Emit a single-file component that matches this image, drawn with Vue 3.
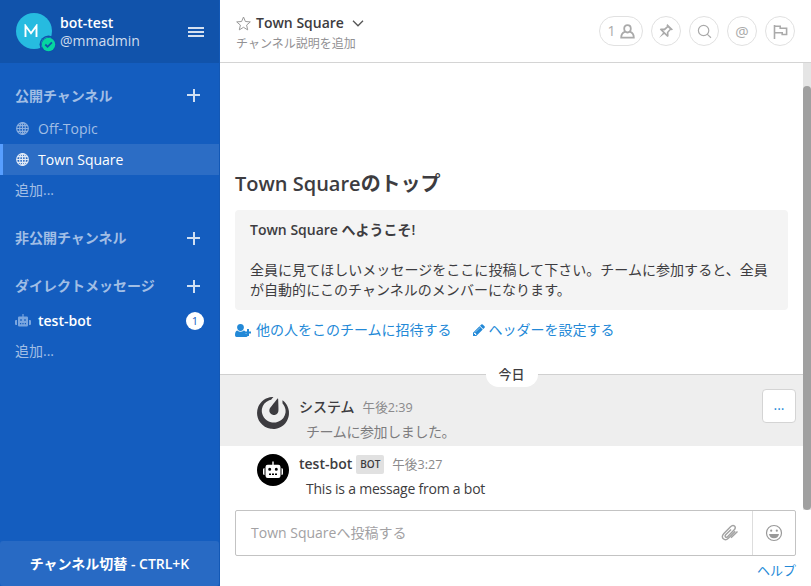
<script setup>
const publicChannels = [
  { name: 'Off-Topic', active: false },
  { name: 'Town Square', active: true },
]
</script>

<template>
  <div class="app">
    <aside class="sidebar">
      <header class="team">
        <div class="avatar">
          <svg class="avatar-letter" viewBox="0 0 14 14"><path d="M1.5 13V1.8L7 9.2l5.5-7.4V13" /></svg>
          <svg class="status" viewBox="0 0 15 15">
            <circle cx="7.5" cy="7.5" r="7.5" fill="#1153ab" />
            <circle cx="7.5" cy="7.5" r="6.7" fill="#06d6a0" />
            <path d="M4.3 7.5l2.3 2.3 4.3-4.4" fill="none" stroke="#1153ab" stroke-width="1.8" />
          </svg>
        </div>
        <div class="names">
          <b>bot-test</b>
          <span>@mmadmin</span>
        </div>
        <svg class="burger" viewBox="0 0 16 10"><path d="M0 0h16v2H0zM0 4h16v2H0zM0 8h16v2H0z" /></svg>
      </header>

      <nav class="channels">
        <section>
          <h4>公開チャンネル<i class="plus"></i></h4>
          <a v-for="c in publicChannels" :key="c.name" class="row" :class="{ active: c.active }">
            <svg class="globe" viewBox="0 0 13 13">
              <circle cx="6.5" cy="6.5" r="5.8" />
              <ellipse cx="6.5" cy="6.5" rx="2.8" ry="5.8" />
              <path d="M6.5.7v11.6M.7 6.5h11.6M1.5 3.6h10M1.5 9.4h10" />
            </svg>
            {{ c.name }}
          </a>
          <a class="row more">追加...</a>
        </section>
        <section>
          <h4>非公開チャンネル<i class="plus"></i></h4>
        </section>
        <section>
          <h4>ダイレクトメッセージ<i class="plus"></i></h4>
          <a class="row unread">
            <svg class="robot" viewBox="0 0 16 13">
              <path fill-rule="evenodd" d="M7.4 0h1.2v2.5h3.2q1.2 0 1.2 1.2v7.6q0 1.2-1.2 1.2H4.2Q3 12.5 3 11.300V3.700q0-1.200 1.200-1.200h3.200zM5.200 5.200v1.600h1.600V5.200zM9.200 5.200v1.600h1.600V5.200zM5 9v1.200h1.200V9zM7.400 9v1.200h1.200V9zM9.800 9v1.200H11V9zM1 6h1v5H1q-1 0-1-1V7q0-1 1-1zM14 6h1q1 0 1 1v3q0 1-1 1h-1z" />
            </svg>
            test-bot
            <span class="badge">1</span>
          </a>
          <a class="row more">追加...</a>
        </section>
      </nav>
      <button class="switcher">チャンネル切替 - CTRL+K</button>
    </aside>

    <main class="center">
      <header class="channel-header">
        <div class="channel-info">
          <div class="title">
            <svg class="star" viewBox="0 0 15 15"><path d="M7.500 1l1.900 4.500 4.900.4-3.700 3.200 1.100 4.800-4.200-2.600-4.200 2.600 1.100-4.800L.7 5.900l4.900-.4z" /></svg>
            <strong>Town Square</strong>
            <svg class="chevron" viewBox="0 0 12 7"><path d="M1 .8l5 5 5-5" /></svg>
          </div>
          <div class="desc">チャンネル説明を追加</div>
        </div>
        <div class="tools">
          <span class="tool members">1
            <svg width="15" height="15" viewBox="0 0 15 15"><path d="M7.500 1.200c2.200 0 3.300 1.500 3.300 3.500S9.500 8.500 7.500 8.500 4.200 6.700 4.200 4.700s1.100-3.500 3.300-3.500zM4.700 7.900C2.500 8.800 1.200 10 1.200 13.600h12.600c0-3.600-1.300-4.800-3.500-5.700" fill="none" stroke="currentColor" stroke-width="1.800" /></svg>
          </span>
          <span class="tool">
            <svg width="16" height="16" viewBox="0 0 16 16"><path fill="currentColor" fill-rule="evenodd" d="M9.300 1l5.700 5.500-1.200.8-1-.3-2.300 2.600.1 3.600-1.200.8L6.200 11 1 15l4-5.200-3.200-3.200.8-1.200 3.600.1L8.900 3.200 8.500 2.200zM10 4.400L6.700 7.400 4.900 7.300l4 4-.1-2 2.900-3.300z" /></svg>
          </span>
          <span class="tool">
            <svg width="15" height="15" viewBox="0 0 15 15"><path d="M11.800 6.500a5.200 5.200 0 1 1-10.400 0 5.200 5.200 0 0 1 10.400 0zM10.400 10.400l3.600 3.300" fill="none" stroke="currentColor" stroke-width="1.200" /></svg>
          </span>
          <span class="tool at">@</span>
          <span class="tool">
            <svg width="15" height="15" viewBox="0 0 15 15"><path d="M1.500 1v14M1.500 2.300h5.700v1.900h6.400v6.300H9.200V8.700H1.500" fill="none" stroke="currentColor" stroke-width="1.600" /></svg>
          </span>
        </div>
      </header>

      <div class="feed">
        <div class="posts">
          <div class="intro">
            <h2>Town Squareのトップ</h2>
            <div class="welcome">
              <strong>Town Square へようこそ!</strong>
              <p>全員に見てほしいメッセージをここに投稿して下さい。チームに参加すると、全員が自動的にこのチャンネルのメンバーになります。</p>
            </div>
            <div class="links">
              <a>
                <svg width="16" height="13" viewBox="0 0 16 13"><path fill="currentColor" d="M5.500 0C7.800 0 8.900 1.500 8.900 3.400S7.500 7 5.500 7 2.100 5.300 2.100 3.400 3.200 0 5.500 0zM2.200 6.400q3.300 2.600 6.600 0 .8.100 1.400.8v2.500h2.400v2q0 1.300-1.500 1.300H1.500Q0 13 0 11.200 0 6.800 2.200 6.400zM12 5h2v2.500h2v2h-2V12h-2V9.500H9.800v-2H12z" /></svg>
                他の人をこのチームに招待する
              </a>
              <a>
                <svg width="14" height="14" viewBox="0 0 1792 1792"><path fill="currentColor" d="M491 1536l91-91-235-235-91 91v107h128v128h107zm523-928q0-22-22-22-10 0-17 7l-542 542q-7 7-7 17 0 22 22 22 10 0 17-7l542-542q7-7 7-17zm-54-192l416 416-832 832h-416v-416zm683 96q0 53-37 90l-166 166-416-416 166-165q36-38 90-38 53 0 91 38l235 234q37 39 37 91z" /></svg>
                ヘッダーを設定する
              </a>
            </div>
          </div>

          <div class="divider"><span>今日</span></div>

          <article class="post system">
            <svg class="pic" viewBox="0 0 501 501">
              <path d="M236,.7C137.700,7.500,54,68.200,18.200,158.500c-32,81-19.600,172.800,33,242.500 39.800,53,97.200,87,164.300,97,16.500,2.700,48,3.200,63.500,1.200 48.700-6.300,92.200-24.600,129-54.200 13-10.500,33-31.200,42.200-43.700 26.400-35.500,42.800-75.800,49-120.300 1.600-12.300,1.600-48.700,0-61-4-28.300-12-54.800-24.200-79.500-12.800-26-26.500-45.300-46.800-65.800C417.800,64,400.200,49,398.400,49c-.6,0-.4,10.500.3,26l1.300,26 7,8.700c19,23.700,32.800,53.500,38.200,83 2.500,14,3.200,43,1,55.800-4.500,27.800-15.200,54-31,76.500-8.600,12.200-28,31.600-40.200,40.200-24,17-50,27.600-80,33-10,1.800-49,1.800-59,0-43-7.700-78.800-26-107.200-54.800-29.300-29.700-46.500-64-52.400-104.400-2-14-1.500-42,1-55C90,121.400,132,72,192,49.700c8-3,18.400-5.800,29.500-8.200 1.700-.4,34.400-38,35.300-40.600.3-1-10.200-1-20.800-.4z" />
              <path d="M322.200,24.600c-1.300.8-8.400,9.300-16,18.700-7.400,9.500-22.400,28-33.200,41.200-51,62.200-66,81.600-70.600,91-6,12-8.400,21-9,33-1.200,19.800,5,36,19,50C222,268,230,273,243,277.200c9,3,10.400,3.200,24,3.200 13.800,0,15,0,22.600-3 23.200-9,39-28.400,45-55.700 2-8.200,2-28.700.4-79.700l-2-72c-1-36.800-1.400-41.800-3-44-2-3-4.800-3.600-7.800-1.400z" />
            </svg>
            <div class="content">
              <div class="meta"><strong>システム</strong><time>午後2:39</time></div>
              <p>チームに参加しました。</p>
            </div>
            <button class="dots">...</button>
          </article>

          <article class="post bot">
            <svg class="pic" viewBox="0 0 32 32">
              <circle cx="16" cy="16" r="16" fill="#000" />
              <path fill="#fff" fill-rule="evenodd" d="M15.300 7.500h1.400v3.200h4.600q2.200 0 2.200 2.200v8.900q0 2.200-2.200 2.200H10.700q-2.200 0-2.200-2.200v-8.900q0-2.200 2.200-2.200h4.600zM12.700 13.700a1.500 1.500 0 1 0 0 3 1.500 1.500 0 1 0 0-3zM19.300 13.700a1.500 1.500 0 1 0 0 3 1.500 1.500 0 1 0 0-3zM12 19.500V21h2v-1.500zM15 19.500V21h2v-1.500zM18 19.500V21h2v-1.500zM7.500 14v7Q6 21 6 19.500v-4Q6 14 7.500 14zM24.500 14v7q1.500 0 1.500-1.500v-4q0-1.500-1.500-1.500z" />
            </svg>
            <div class="content">
              <div class="meta"><strong>test-bot</strong><span class="tag">BOT</span><time>午後3:27</time></div>
              <p>This is a message from a bot</p>
            </div>
          </article>
        </div>
        <div class="scrollbar"><div class="thumb"></div></div>
      </div>

      <footer class="composer">
        <div class="box">
          <span class="placeholder">Town Squareへ投稿する</span>
          <svg class="clip" width="18" height="17" viewBox="0 0 18 17"><path d="M14.200 7.200l-6.600 6.700c-1.600 1.600-3.700 2.400-5.300.9s-1-3.700.6-5.300l6.400-6.600c1.300-1.300 3-2 4.200-.8s.8 2.700-.5 4l-6.200 6.400c-.8.8-1.600 1.100-2.300.4s-.4-1.500.4-2.300l5.200-5.200M10 13.800l6.500-6.400" /></svg>
          <span class="emoji">
            <svg width="18" height="18" viewBox="0 0 18 18">
              <circle cx="9" cy="9" r="7.500" fill="none" stroke="currentColor" stroke-width="1.200" />
              <circle cx="6.200" cy="6.700" r="1.100" fill="currentColor" /><circle cx="11.800" cy="6.700" r="1.100" fill="currentColor" />
              <path d="M4 10h10q-.7 4.200-5 4.200T4 10z" fill="currentColor" />
            </svg>
          </span>
        </div>
        <a class="help">ヘルプ</a>
      </footer>
    </main>
  </div>
</template>

<style>
body {
  margin: 0;
  overflow: hidden;
}
</style>

<style scoped>
.app {
  display: flex;
  width: 811px;
  height: 586px;
  font: 14px/20px "Open Sans", "Noto Sans CJK JP", sans-serif;
  color: #3d3c40;
  background: #fff;
}
.app *, .app *::before, .app *::after { box-sizing: border-box; }
h2, h4, p { margin: 0; }
svg { flex: none; display: block; }
button { font: inherit; margin: 0; }

.sidebar {
  display: flex;
  flex-direction: column;
  width: 220px;
  flex: none;
  background: #145dbf;
  border-right: 1px solid #1358b5;
}
.team {
  display: flex;
  height: 63px;
  padding: 13px 14px 0 16px;
  background: #1153ab;
}
.avatar {
  position: relative;
  width: 36px;
  height: 36px;
  border-radius: 50%;
  background: #26bbe0;
}
.avatar-letter {
  width: 14px;
  height: 14px;
  margin: 11px 0 0 8px;
  fill: none;
  stroke: #fff;
  stroke-width: 1.900;
}
.status { position: absolute; width: 15px; height: 15px; right: -4px; bottom: -3px; border-radius: 50%; box-shadow: 0 0 0 1.500px #1153ab; }
.names {
  flex: 1;
  display: flex;
  flex-direction: column;
  padding: 1px 0 0 8px;
  line-height: 18px;
  color: #fff;
}
.names b { font-weight: 600; }
.names span { color: #d0ddee; }
.burger { width: 16px; height: 10px; margin: 14px 1px 0 0; fill: #d5e0f0; }

.channels { flex: 1; display: flex; flex-direction: column; }
section { display: flex; flex-direction: column; }
section:nth-child(1) { padding-top: 19px; }
section:nth-child(2) { padding-top: 18px; }
section:nth-child(3) { padding-top: 19px; }
h4 {
  display: flex;
  align-items: center;
  justify-content: space-between;
  height: 28px;
  padding: 0 19px 0 15px;
  font-size: 14px;
  font-weight: 600;
  color: #a1bee5;
}
section:nth-child(1) h4 { height: 31px; padding-bottom: 4px; }
section:nth-child(3) h4 { height: 34px; padding-bottom: 4px; }
.plus {
  width: 13px;
  height: 13px;
  background:
    linear-gradient(#d0dff2, #d0dff2) 0 5px / 13px 2px no-repeat,
    linear-gradient(#d0dff2, #d0dff2) 6px 0 / 2px 13px no-repeat;
}
.row {
  display: flex;
  align-items: center;
  height: 31px;
  padding: 0 15px 0 16px;
  color: #a1bee5;
}
.row.active {
  padding-left: 13px;
  color: #fff;
  border-left: 3px solid #579eff;
  background: #2c6dc5;
}
.row.more { padding: 0 15px 1px; }
.globe { width: 13px; height: 13px; margin-right: 9px; fill: none; stroke: currentColor; stroke-width: 1.200; opacity: .85; }
.robot { width: 16px; height: 13px; margin: 0 7px 0 -1px; fill: #79a5df; }
.row.unread { color: #fff; font-weight: 600; }
.badge {
  width: 18px;
  height: 18px;
  margin-left: auto;
  border-radius: 50%;
  background: #fff;
  color: #145dbf;
  font-size: 11px;
  font-weight: 400;
  line-height: 18px;
  text-align: center;
}
.switcher {
  height: 45px;
  padding: 0;
  border: 0;
  border-radius: 3px;
  background: #286ac4;
  color: #fff;
  font-weight: 600;
  font-size: 14px;
}

.center { flex: 1; display: flex; flex-direction: column; min-width: 0; }
.channel-header {
  display: flex;
  justify-content: space-between;
  height: 63px;
  padding: 0 16px 0 16px;
  border-bottom: 1px solid #d4d4d4;
}
.channel-info { padding-top: 13px; }
.title { display: flex; align-items: center; height: 20px; }
.title strong { font-weight: 600; }
.star { width: 15px; height: 15px; margin-right: 5px; fill: none; stroke: #999; stroke-width: 1; }
.chevron { width: 12px; height: 7px; margin-left: 8px; fill: none; stroke: #555; stroke-width: 1.300; }
.desc { font-size: 12px; color: #929194; line-height: 22px; }
.tools { display: flex; gap: 8px; padding-top: 16px; }
.tool {
  display: flex;
  align-items: center;
  justify-content: center;
  width: 30px;
  height: 30px;
  border: 1px solid #e1e1e1;
  border-radius: 15px;
  color: #aaa;
}
.members { width: 44px; gap: 4px; }
.at { font-size: 15px; }

.feed { display: flex; height: 447px; }
.posts { flex: 1; display: flex; flex-direction: column; min-width: 0; }
.intro { padding: 106px 15px 0 15px; height: 299px; }
h2 { font-size: 20px; line-height: 29px; font-weight: 600; }
.welcome {
  height: 100px;
  margin-top: 12px;
  padding: 10px 15px;
  border-radius: 4px;
  background: #f4f4f4;
}
.welcome strong { display: block; font-weight: 600; }
.welcome p { margin: 20px -5px 0 0; letter-spacing: .04px; }
.links { display: flex; gap: 20px; padding-top: 10px; color: #2389d7; }
.links a { display: flex; align-items: center; gap: 5px; }
.links a + a { gap: 3px; }
.divider {
  display: flex;
  justify-content: center;
  align-items: center;
  height: 25px;
  background: linear-gradient(#fff 12px, #d0d0d0 12px, #d0d0d0 13px, #eee 13px);
}
.divider span {
  width: 52px;
  height: 25px;
  border-radius: 13px;
  background: #fff;
  font-size: 13px;
  font-weight: 500;
  line-height: 25px;
  text-align: center;
}
.post { display: flex; padding-left: 37px; }
.post.system { height: 59px; background: #eee; padding-top: 10px; }
.post.bot { height: 64px; padding-top: 8px; }
.pic { width: 32px; height: 32px; fill: #3d3c40; }
.content { padding-left: 10px; flex: 1; }
.meta { display: flex; align-items: center; height: 20px; }
.meta strong { font-weight: 500; }
.bot .meta strong { font-weight: 600; }
.meta time { margin-left: 8px; padding-top: 1px; font-size: 12.600px; color: #8b8a8c; }
.content p { padding: 5px 0 0 7px; }
.system .content p { color: #7d7c7e; letter-spacing: -.400px; }
.bot .content p { letter-spacing: -.220px; }
.tag {
  width: 28px;
  height: 19px;
  margin-left: 4px;
  border-radius: 2px;
  background: #e1e1e1;
  font-size: 10px;
  font-weight: 600;
  line-height: 19px;
  text-align: center;
}
.dots {
  width: 34px;
  height: 34px;
  margin: -8px 7px 0 0;
  padding: 0 0 3px;
  border: 1px solid #d4d4d4;
  border-radius: 4px;
  background: #fff;
  color: #2389d7;
}
.scrollbar { width: 8px; padding-top: 23px; background: #e5e5e5; }
.thumb { height: 424px; border-radius: 4px; background: #a0a0a0; }

.composer { display: flex; flex-direction: column; padding: 0 15px; }
.box {
  display: flex;
  align-items: center;
  height: 46px;
  border: 1px solid #c3c3c3;
  border-radius: 2px;
  padding-left: 15px;
  color: #999;
}
.placeholder { flex: 1; color: #a2a1a3; }
.clip { margin: -1px 13px 0 0; fill: none; stroke: #a2a2a2; stroke-width: 1.400; }
.emoji {
  display: flex;
  align-items: center;
  justify-content: center;
  width: 43px;
  height: 44px;
  border-left: 1px solid #ddd;
}
.help { margin-top: 4px; align-self: flex-end; font-size: 13px; color: #2389d7; }
</style>
